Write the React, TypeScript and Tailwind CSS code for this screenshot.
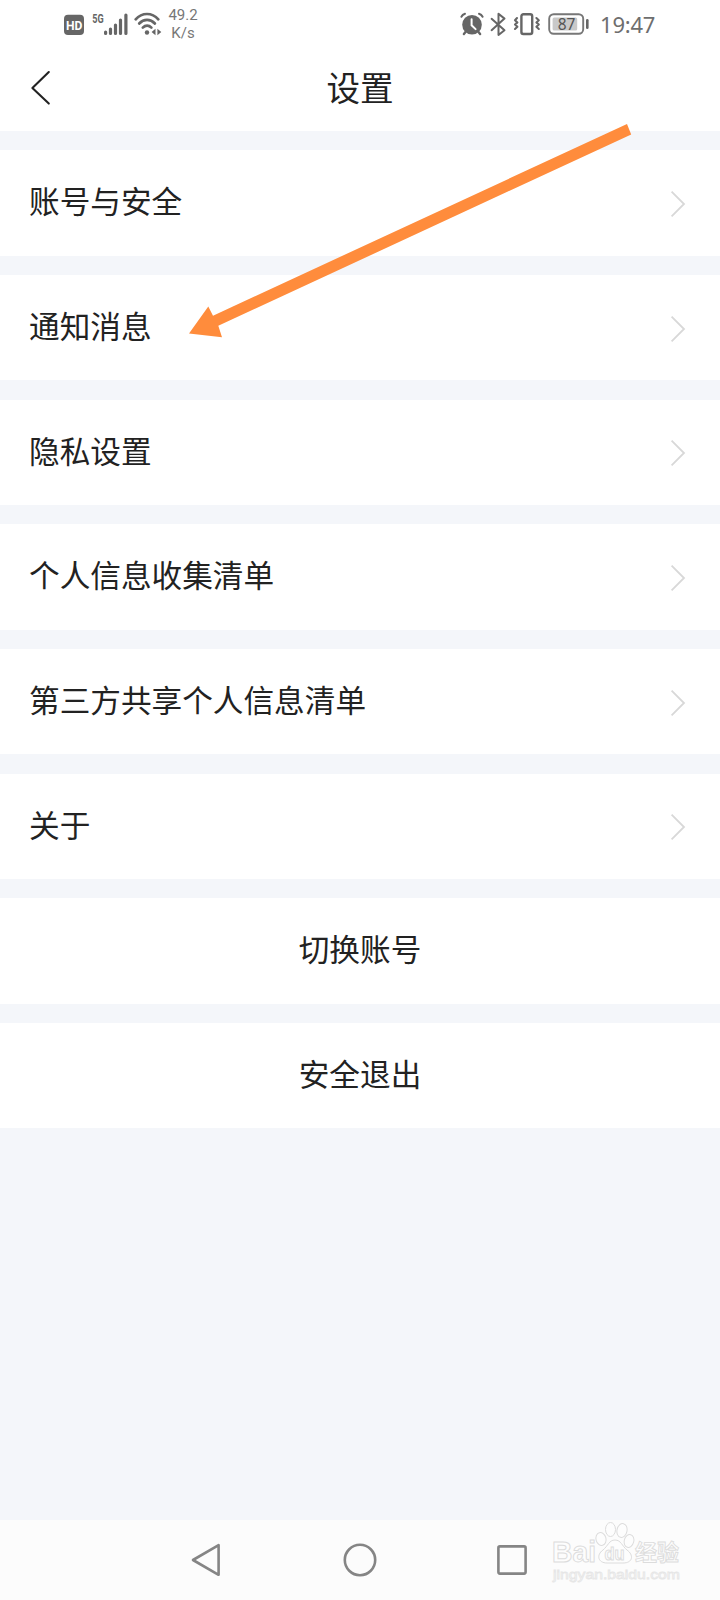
const ITEMS = ['账号与安全', '通知消息', '隐私设置', '个人信息收集清单', '第三方共享个人信息清单', '关于'];
const ACTIONS = ['切换账号', '安全退出'];

function StatusLeft() {
  return (
    <div className="flex h-full items-start text-[#666666]">
      <svg className="mt-[14px] ml-[63px] h-[22px] w-[22px]" viewBox="0 0 22 22">
        <rect x="1" y="0.8" width="20" height="20.2" rx="4" fill="currentColor" />
        <text x="2.9" y="15.7" fill="#fff" fontSize="13.5" fontWeight="700" fontFamily="Roboto, sans-serif" textLength="16.4" lengthAdjust="spacingAndGlyphs">HD</text>
      </svg>
      <svg className="mt-[10px] ml-[7px] h-[28px] w-[37px]" viewBox="0 0 37 28">
        <text x="0.3" y="12.6" fill="currentColor" fontSize="13" fontWeight="700" fontFamily="Roboto, sans-serif" textLength="11.4" lengthAdjust="spacingAndGlyphs">5G</text>
        <g stroke="currentColor" strokeWidth="3.2" strokeLinecap="round">
          <path d="M13.6 22v1.4M18.5 19v4.4M23.5 15v8.4M28.5 10v13.4M33.9 5v18.4" />
        </g>
      </svg>
      <svg className="mt-[11px] ml-[5px] h-[26px] w-[28px]" viewBox="0 0 28 26" fill="none" stroke="currentColor" strokeWidth="2.7" strokeLinecap="round">
        <path d="M1.7 8.3C8 1.2 18 1.2 24.3 8.3" />
        <path d="M5.2 12.5C9.8 7.6 16.3 7.6 20.9 12.5" />
        <path d="M8.8 16.6C11.4 14 14.8 14 17.4 16.6" />
        <circle cx="13" cy="21.5" r="2.2" fill="currentColor" stroke="none" />
        <path d="M21.5 17.8v6.4L17.6 21ZM23.4 17.8v6.4L27.3 21Z" fill="currentColor" stroke="none" />
      </svg>
      <div className="mt-[6px] ml-[4px] flex w-[34px] flex-col text-center font-[Roboto,sans-serif] text-[15px] leading-[18px] text-[#777777]">
        <span>49.2</span>
        <span>K/s</span>
      </div>
    </div>
  );
}

function StatusRight() {
  return (
    <div className="mr-[63px] flex h-full items-start text-[#666666]">
      <svg className="mt-[12px] h-[24px] w-[24px]" viewBox="0 0 24 24" fill="none" stroke="currentColor" strokeLinecap="round">
        <circle cx="12" cy="12.8" r="9.8" fill="currentColor" stroke="none" />
        <path d="M1.4 4.8Q2.5 2.6 5 1.8M22.6 4.8Q21.5 2.6 19 1.8" strokeWidth="2" />
        <path d="M5.5 20l-1.6 2M18.5 20l1.6 2" strokeWidth="2.4" />
        <path d="M11.6 7.3v6l4 3.8" stroke="#fff" strokeWidth="2" />
      </svg>
      <svg className="mt-[12px] ml-[6px] h-[25px] w-[18px]" viewBox="0 0 18 25" fill="none" stroke="currentColor" strokeWidth="2" strokeLinejoin="round" strokeLinecap="round">
        <path d="M1.6 6.8L14.5 18.2L8.5 23V1.8L14.5 6.6L1.6 18.2" />
      </svg>
      <svg className="mt-[12px] ml-[5px] h-[25px] w-[28px]" viewBox="0 0 28 25" fill="none" stroke="currentColor" strokeLinejoin="round" strokeLinecap="round">
        <rect x="8.4" y="2.2" width="10.8" height="19.8" rx="2" strokeWidth="2.4" />
        <path d="M4 6l-2 2.2 2.4 2.2-2.4 2.2 2.4 2.2-2.4 2.2M23.4 6l2.4 2.2-2.4 2.2 2.4 2.2-2.4 2.2 2.4 2.2" strokeWidth="2.1" />
      </svg>
      <svg className="mt-[12px] ml-[7px] h-[24px] w-[42px]" viewBox="0 0 42 24">
        <rect x="1.2" y="2.2" width="34" height="19.6" rx="4.5" fill="none" stroke="#777777" strokeWidth="1.9" />
        <rect x="4.6" y="5.4" width="24.6" height="13.2" rx="1.5" fill="#c9c9c9" />
        <text x="18.6" y="17.5" textAnchor="middle" fill="#555555" fontSize="15.5" fontFamily="'Noto Sans', sans-serif">87</text>
        <rect x="38" y="7" width="2.6" height="10" rx="1.3" fill="currentColor" />
      </svg>
      <span className="mt-[9px] ml-[10px] w-[57px] whitespace-nowrap font-['Noto_Sans',sans-serif] text-[22px] leading-[30px] tracking-[-0.2px] text-[#6e6e6e]">19:47</span>
    </div>
  );
}

function Chevron() {
  return (
    <svg className="mt-[2px] mr-[34px] h-[28px] w-[16px]" viewBox="0 0 16 28" fill="none" stroke="#d8d8d8" strokeWidth="1.8">
      <path d="M1.6 1.6L14 14L1.6 26.4" />
    </svg>
  );
}

function Watermark() {
  return (
    <svg className="absolute top-0 left-[546px] h-[70px] w-[150px]" viewBox="0 0 150 70" fill="#fdfdfd" stroke="#dcdcdc" strokeWidth="1">
      <text x="6" y="42" fontSize="29" fontWeight="700" fontFamily="'Liberation Sans', sans-serif" textLength="44" lengthAdjust="spacingAndGlyphs">Bai</text>
      <ellipse cx="55" cy="19" rx="5" ry="6.5" transform="rotate(-15 55 19)" />
      <ellipse cx="64.5" cy="9.5" rx="5" ry="7" />
      <ellipse cx="76" cy="10.5" rx="5" ry="7" transform="rotate(12 76 10.5)" />
      <ellipse cx="83" cy="21" rx="4.8" ry="6.5" transform="rotate(15 83 21)" />
      <path d="M69 20C63 20 62 26 57 30C50 35 52 43 61 43H77C87 43 88 35 81 30C76 26 75 20 69 20Z" />
      <text x="58.5" y="39.5" fontSize="19" fontWeight="700" fontFamily="'Liberation Sans', sans-serif" textLength="20" lengthAdjust="spacingAndGlyphs">du</text>
      <text x="89" y="40" fontSize="22" fontWeight="700" strokeWidth="0.9" fontFamily="'Noto Sans CJK SC', sans-serif">经验</text>
      <text x="7" y="58.6" fontSize="13.5" fontWeight="400" stroke="#e6e6e6" strokeWidth="0.8" fontFamily="'Liberation Sans', sans-serif" textLength="127" lengthAdjust="spacingAndGlyphs">jingyan.baidu.com</text>
    </svg>
  );
}

export default function App() {
  return (
    <div className="relative flex h-[1600px] w-[720px] flex-col overflow-hidden bg-[#f4f6fa] font-['Noto_Sans_CJK_SC',sans-serif] text-[#222222]">
      <header className="h-[131px] shrink-0 bg-white">
        <div className="flex h-[48px] justify-between">
          <StatusLeft />
          <StatusRight />
        </div>
        <div className="grid h-[80px] grid-cols-[1fr_auto_1fr] items-center">
          <svg className="ml-[30px] h-[36px] w-[22px]" viewBox="0 0 22 36" fill="none" stroke="currentColor" strokeWidth="2.1" strokeLinecap="round" strokeLinejoin="round">
            <path d="M18.8 2L2.4 18L18.8 33.6" />
          </svg>
          <h1 className="mb-[3px] text-[33.6px] leading-[48px] font-normal">设置</h1>
        </div>
      </header>

      <main className="flex flex-1 flex-col gap-[19.3px] pt-[19.1px] text-[30.65px] leading-[44px]">
        {ITEMS.map((label) => (
          <div key={label} className="flex h-[105.42px] items-center justify-between bg-white">
            <span className="mb-[5px] ml-[29px]">{label}</span>
            <Chevron />
          </div>
        ))}
        {ACTIONS.map((label) => (
          <button key={label} className="flex h-[105.3px] items-center justify-center bg-white">
            <span className="mb-[5px]">{label}</span>
          </button>
        ))}
      </main>

      <nav className="relative flex h-[80px] shrink-0 items-center bg-[#fcfcfc]">
        <svg className="ml-[190px] h-[36px] w-[32px]" viewBox="0 0 32 36" fill="none" stroke="#858585" strokeWidth="2.6" strokeLinejoin="round">
          <path d="M28.6 3.2V32.8L3 18Z" />
        </svg>
        <svg className="ml-[120px] h-[36px] w-[36px]" viewBox="0 0 36 36" fill="none" stroke="#858585" strokeWidth="2.6">
          <circle cx="18" cy="18" r="15.2" />
        </svg>
        <svg className="ml-[116px] h-[36px] w-[36px]" viewBox="0 0 36 36" fill="none" stroke="#858585" strokeWidth="2.6">
          <rect x="4.4" y="4.4" width="27.2" height="27.2" rx="1.5" />
        </svg>
        <Watermark />
      </nav>

      <svg className="absolute top-[110px] left-[180px] h-[240px] w-[460px]" viewBox="180 110 460 240" fill="#ff8c3c">
        <path d="M189 333.5L208.3 306.5L213 315.7L627 124L631.2 134.4L218.3 325.8L222 337.2Z" />
      </svg>
    </div>
  );
}
